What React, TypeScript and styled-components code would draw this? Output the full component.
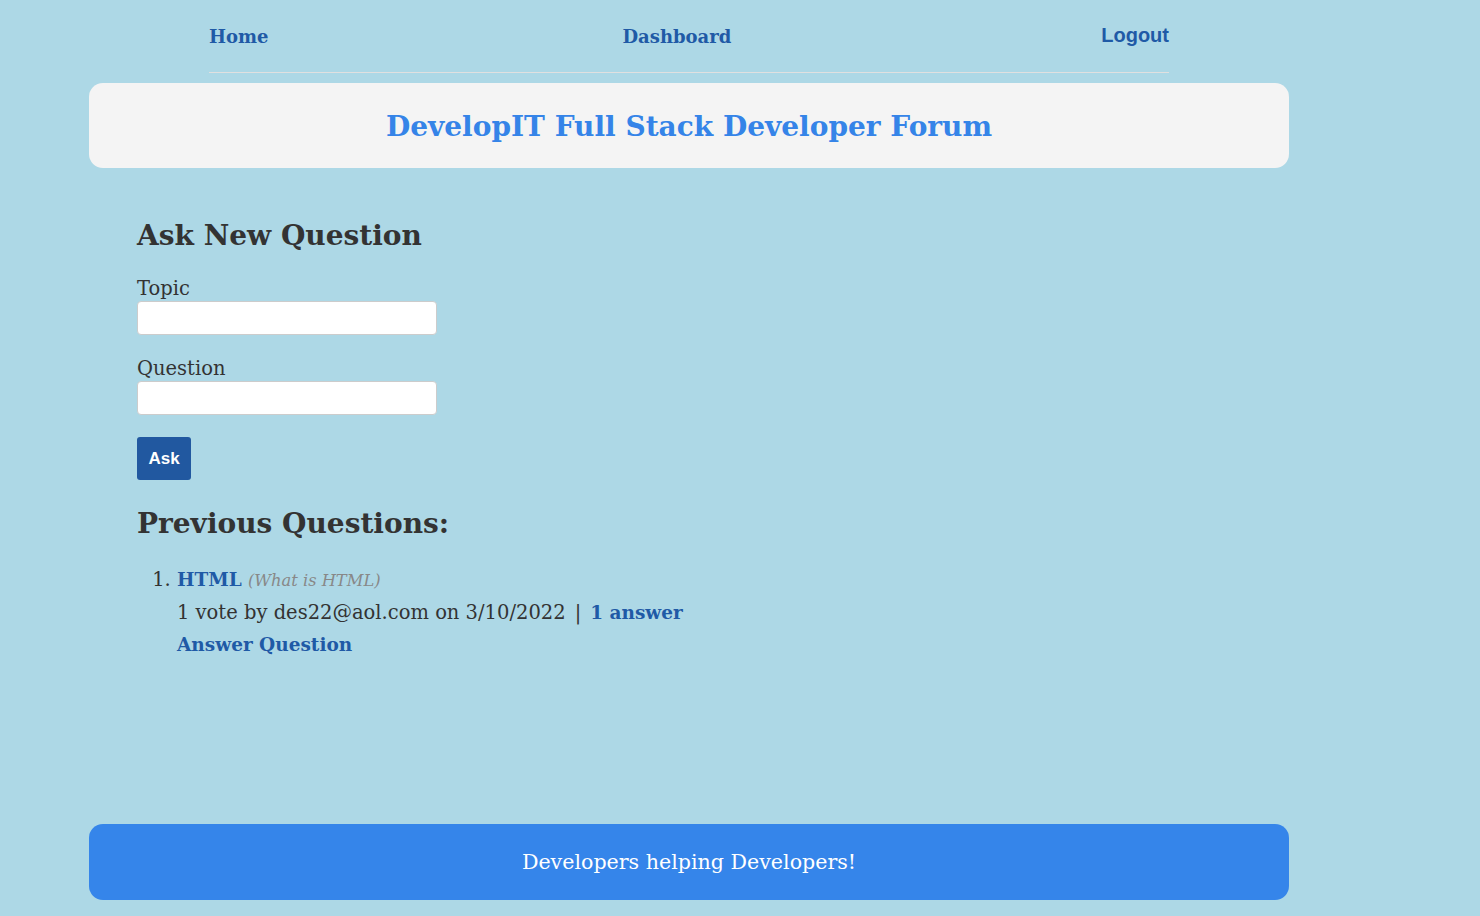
import React from "react";
import styled, { createGlobalStyle } from "styled-components";

const Global = createGlobalStyle`
  html, body { margin: 0; padding: 0; }
  body {
    background: #add8e6;
    font-family: "DejaVu Serif", "Liberation Serif", serif;
    color: #333;
  }
`;

const Page = styled.div`
  min-height: 100vh;
  box-sizing: border-box;
  display: flex;
  flex-direction: column;
  width: 1200px;
  margin-left: 89px;
  padding-bottom: 16px;
`;

const Nav = styled.nav`
  margin: 0 120px;
  height: 73px;
  box-sizing: border-box;
  border-bottom: 1px solid #e0e0e0;
  display: flex;
  justify-content: space-between;
  align-items: flex-start;
  padding-top: 26px;
`;

const NavLink = styled.a<{ $sans?: boolean; $shift?: number }>`
  color: #1f5aa6;
  text-decoration: none;
  font-weight: bold;
  font-size: ${(p) => (p.$sans ? "20px" : "18px")};
  font-family: ${(p) => (p.$sans ? '"Liberation Sans", Arial, sans-serif' : '"DejaVu Serif", serif')};
  margin-top: ${(p) => (p.$sans ? "-2px" : "0")};
  margin-right: ${(p) => p.$shift ?? 0}px;
`;

const Header = styled.header`
  margin-top: 10px;
  height: 85px;
  background: #f4f4f4;
  border-radius: 14px;
  display: flex;
  align-items: center;
  justify-content: center;
`;

const Title = styled.h1`
  margin: 0;
  font-size: 28px;
  color: #3584e8;
  font-weight: bold;
  padding-top: 2px;
`;

const Main = styled.main`
  padding: 0 48px;
`;

const H2 = styled.h2`
  margin: 51px 0 24px;
  font-size: 28px;
  font-weight: bold;
  color: #333;
`;

const Field = styled.div`
  display: flex;
  flex-direction: column;
  margin-bottom: 21px;
`;

const Label = styled.label`
  font-size: 19.5px;
  line-height: 25px;
  color: #333;
`;

const Input = styled.input`
  width: 300px;
  height: 34px;
  box-sizing: border-box;
  border: 1px solid #ccc;
  border-radius: 4px;
  background: #fff;
`;

const AskButton = styled.button`
  width: 54px;
  height: 43px;
  background: #2158a0;
  color: #fff;
  border: none;
  border-radius: 3px;
  font-family: "Liberation Sans", Arial, sans-serif;
  font-weight: bold;
  font-size: 17px;
  margin-top: 1px;
`;

const H2Prev = styled(H2)`
  margin: 27px 0 24px;
`;

const List = styled.ol`
  margin: 0;
  padding-left: 40px;
  font-size: 19.5px;
`;

const Item = styled.li`
  line-height: 32px;
`;

const Topic = styled.a`
  color: #1f5aa6;
  font-weight: bold;
  font-size: 18.5px;
  text-decoration: none;
`;

const Sub = styled.i`
  color: #888;
  font-size: 16.3px;
`;

const Sep = styled.span`
  margin: 0 9px;
`;

const Footer = styled.footer`
  margin-top: auto;
  height: 76px;
  background: #3585ea;
  border-radius: 14px;
  display: flex;
  align-items: center;
  justify-content: center;
  color: #fff;
  font-size: 20.6px;
`;

export default function App() {
  return (
    <>
      <Global />
      <Page>
        <Nav>
          <NavLink href="#">Home</NavLink>
          <NavLink href="#" $shift={16}>Dashboard</NavLink>
          <NavLink href="#" $sans>Logout</NavLink>
        </Nav>
        <Header>
          <Title>DevelopIT Full Stack Developer Forum</Title>
        </Header>
        <Main>
          <H2>Ask New Question</H2>
          <Field>
            <Label>Topic</Label>
            <Input />
          </Field>
          <Field>
            <Label>Question</Label>
            <Input />
          </Field>
          <AskButton>Ask</AskButton>
          <H2Prev>Previous Questions:</H2Prev>
          <List>
            <Item>
              <Topic href="#">HTML</Topic> <Sub>(What is HTML)</Sub>
              <br />
              1 vote by des22@aol.com on 3/10/2022<Sep>|</Sep>
              <Topic href="#">1 answer</Topic>
              <br />
              <Topic href="#">Answer Question</Topic>
            </Item>
          </List>
        </Main>
        <Footer>Developers helping Developers!</Footer>
      </Page>
    </>
  );
}
